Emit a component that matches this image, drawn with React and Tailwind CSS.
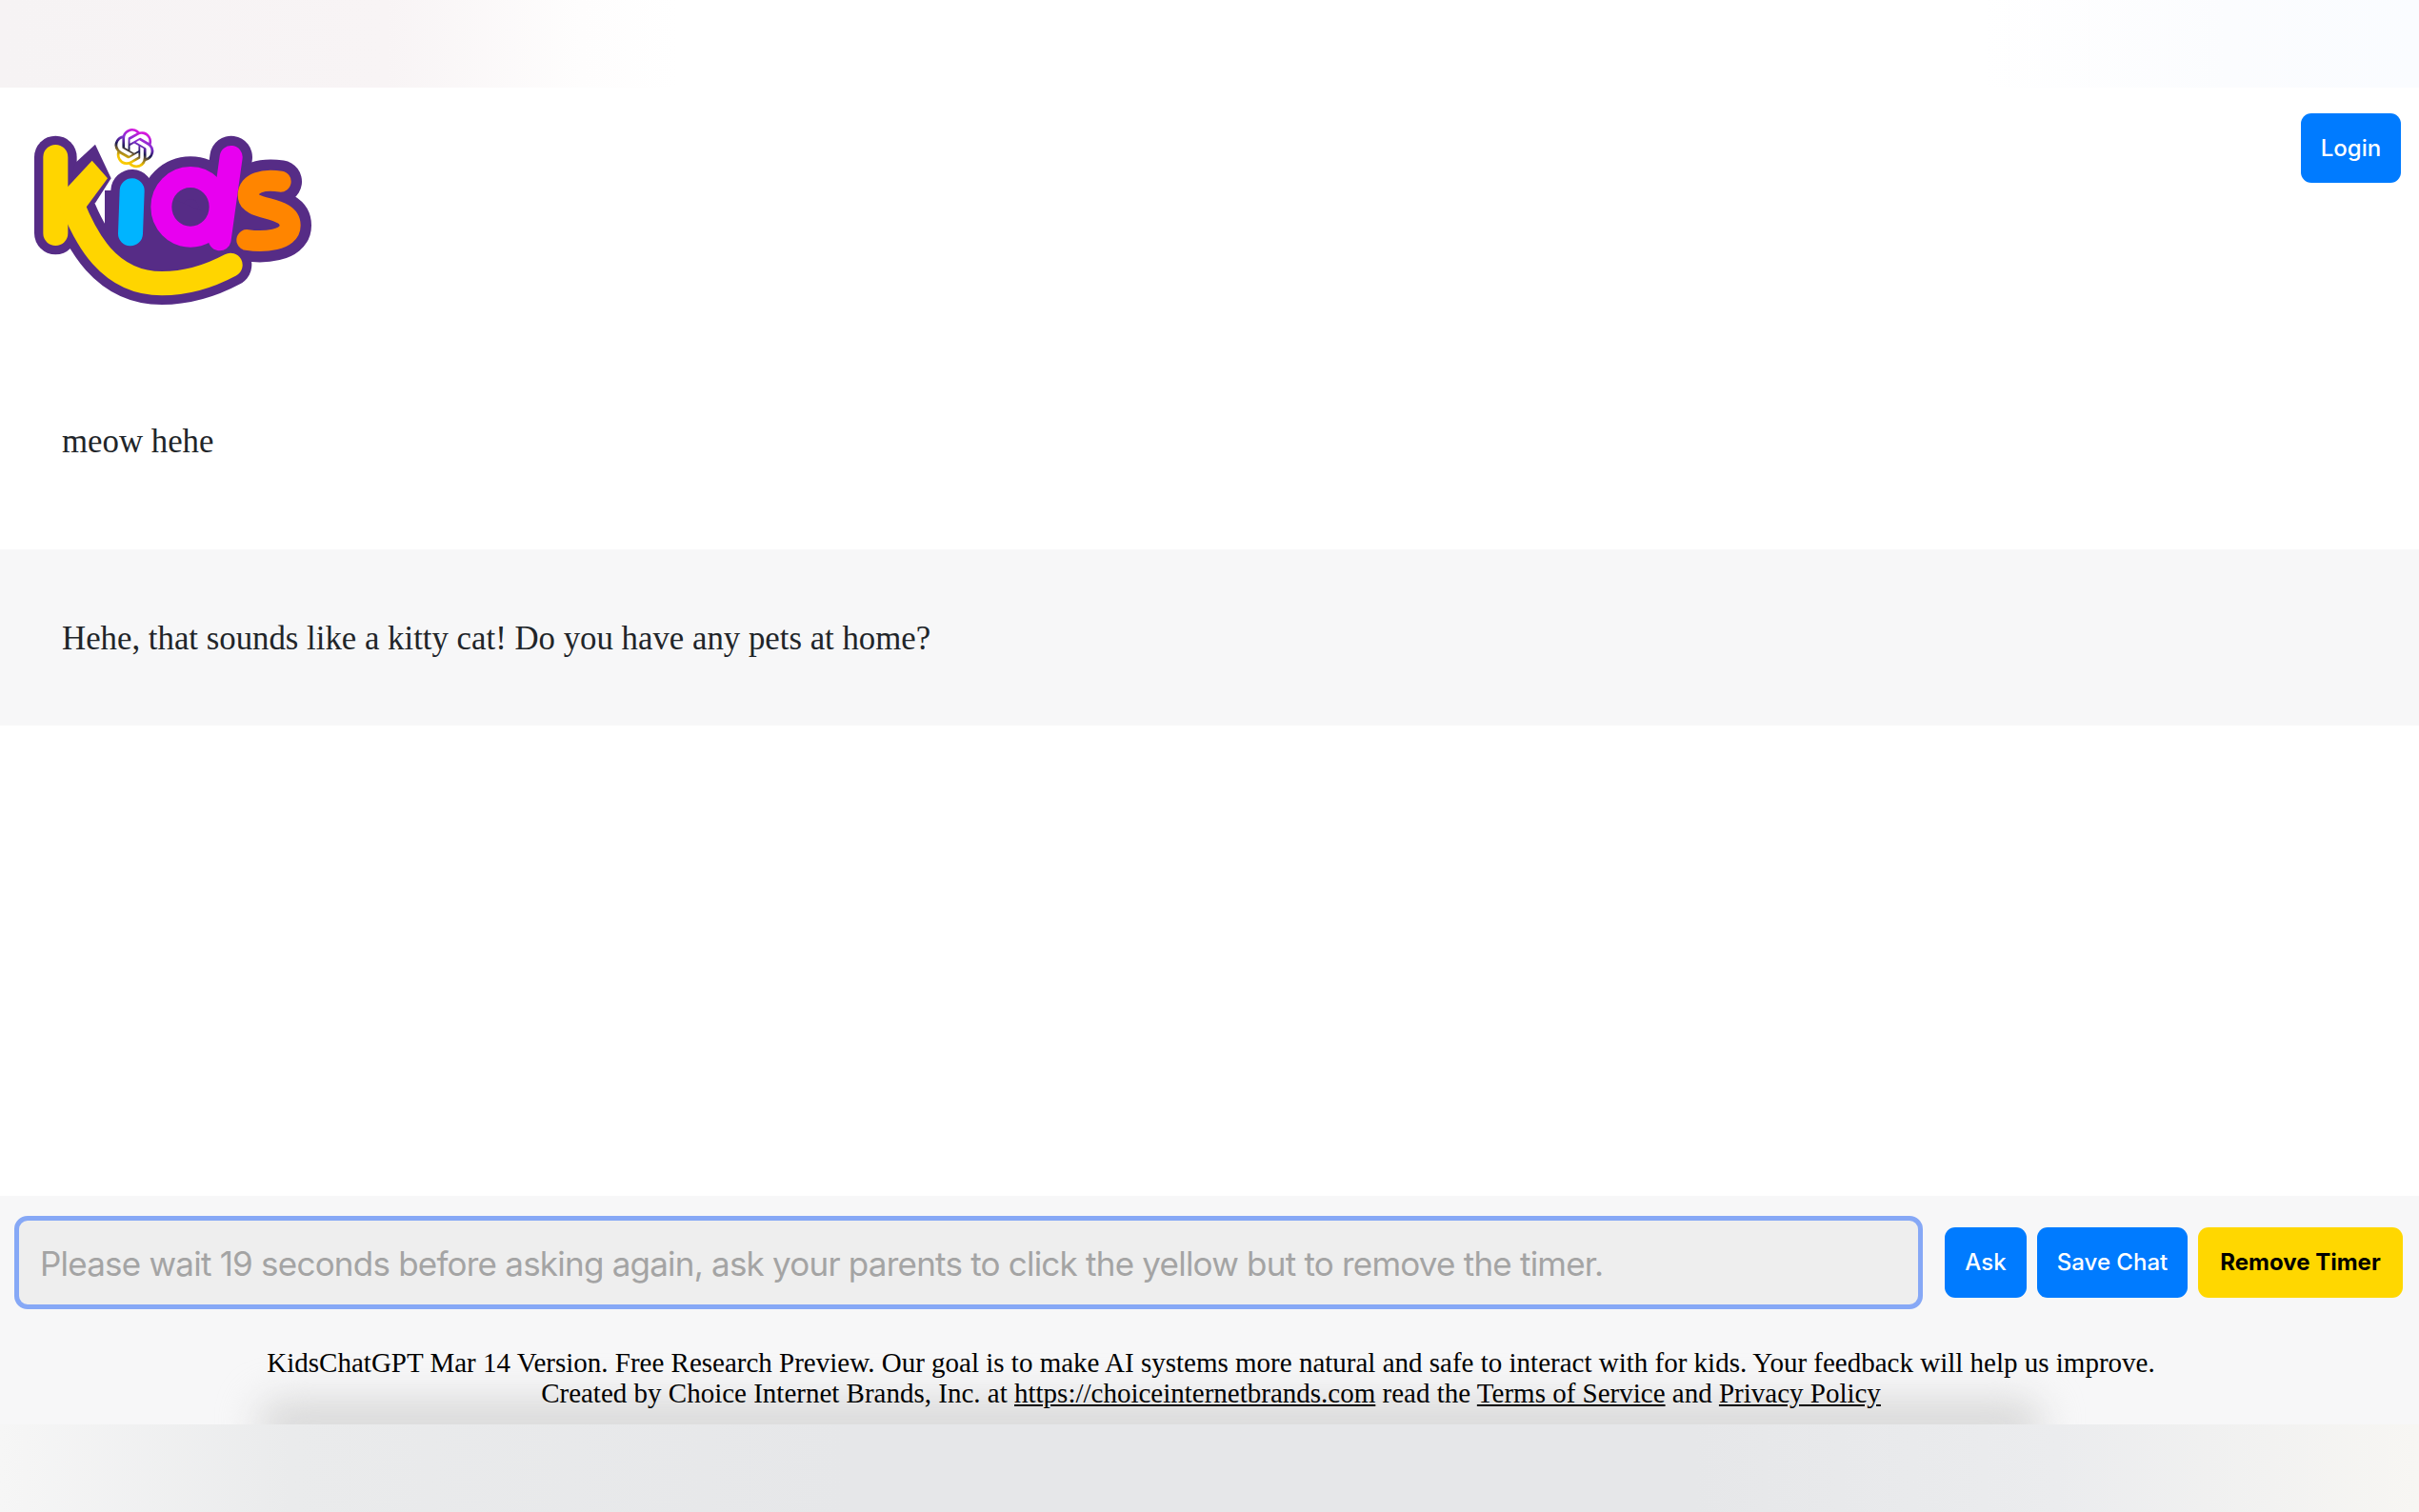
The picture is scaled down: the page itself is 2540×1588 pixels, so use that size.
const OPENAI_PATH =
  'M22.2819 9.8211a5.9847 5.9847 0 0 0-.5157-4.9108 6.0462 6.0462 0 0 0-6.5098-2.9A6.0651 6.0651 0 0 0 4.9807 4.1818a5.9847 5.9847 0 0 0-3.9977 2.9 6.0462 6.0462 0 0 0 .7427 7.0966 5.98 5.98 0 0 0 .511 4.9107 6.051 6.051 0 0 0 6.5146 2.9001A5.9847 5.9847 0 0 0 13.2599 24a6.0557 6.0557 0 0 0 5.7718-4.2058 5.9894 5.9894 0 0 0 3.9977-2.9001 6.0557 6.0557 0 0 0-.7475-7.0729zm-9.022 12.6081a4.4755 4.4755 0 0 1-2.8764-1.0408l.1419-.0804 4.7783-2.7582a.7948.7948 0 0 0 .3927-.6813v-6.7369l2.02 1.1686a.071.071 0 0 1 .038.052v5.5826a4.504 4.504 0 0 1-4.4945 4.4944zm-9.6607-4.1254a4.4708 4.4708 0 0 1-.5346-3.0137l.142.0852 4.783 2.7582a.7712.7712 0 0 0 .7806 0l5.8428-3.3685v2.3324a.0804.0804 0 0 1-.0332.0615L9.74 19.9502a4.4992 4.4992 0 0 1-6.1408-1.6464zM2.3408 7.8956a4.485 4.485 0 0 1 2.3655-1.9728V11.6a.7664.7664 0 0 0 .3879.6765l5.8144 3.3543-2.0201 1.1685a.0757.0757 0 0 1-.071 0l-4.8303-2.7865A4.504 4.504 0 0 1 2.3408 7.872zm16.5963 3.8558L13.1038 8.364 15.1192 7.2a.0757.0757 0 0 1 .071 0l4.8303 2.7913a4.4944 4.4944 0 0 1-.6765 8.1042v-5.6772a.79.79 0 0 0-.407-.667zm2.0107-3.0231l-.142-.0852-4.7735-2.7818a.7759.7759 0 0 0-.7854 0L9.409 9.2297V6.8974a.0662.0662 0 0 1 .0284-.0615l4.8303-2.7866a4.4992 4.4992 0 0 1 6.6802 4.66zM8.3065 12.863l-2.02-1.1638a.0804.0804 0 0 1-.038-.0567V6.0742a4.4992 4.4992 0 0 1 7.3757-3.4537l-.142.0805L8.704 5.459a.7948.7948 0 0 0-.3927.6813zm1.0976-2.3654l2.602-1.4998 2.6069 1.4998v2.9994l-2.5974 1.4997-2.6067-1.4997Z';

const K_STEM = 'M175 195 L175 435';
const SMILE = 'M228 345 C268 445 340 593 510 593 C600 593 670 565 726 535';
const I_STEM = 'M416 301 L411 436';
const D_STEM = 'M728 195 L692 454';
const S_CURVE = 'M884 272 C830 264 782 275 782 315 C782 368 914 345 914 410 C914 458 830 464 778 456';

function KidsLogo() {
  return (
    <svg width="300" height="194" viewBox="90 100 900 580" fill="none" strokeLinecap="round">
      <defs>
        <linearGradient id="knot" x1="0.7" y1="0" x2="0.3" y2="1">
          <stop offset="0" stopColor="#f010e0" />
          <stop offset="0.35" stopColor="#8030d0" />
          <stop offset="0.55" stopColor="#1a1a50" />
          <stop offset="0.8" stopColor="#f0c000" />
          <stop offset="1" stopColor="#ffd000" />
        </linearGradient>
      </defs>

      {/* purple outline */}
      <g stroke="#562c86" strokeWidth="134" strokeLinejoin="round">
        <path d={K_STEM} />
        <path d={SMILE} />
        <path d={I_STEM} />
        <path d={D_STEM} />
        <path d={S_CURVE} />
        <ellipse cx="600" cy="352" rx="92" ry="92" fill="#562c86" />
      </g>
      <path d="M235 215 L300 155 L350 262 L300 340 L215 340 Z" fill="#562c86" />
      <path d="M330 300 L480 300 L720 400 L740 540 L500 560 L330 500 Z" fill="#562c86" />

      {/* letters */}
      <path d={K_STEM} stroke="#ffd500" strokeWidth="78" />
      <path d={SMILE} stroke="#ffd500" strokeWidth="76" />
      <path d="M290 206 L339 262 L244 390 L205 390 L205 298 Z" fill="#ffd500" />
      <path d={I_STEM} stroke="#00b4ff" strokeWidth="78" />
      <ellipse cx="600" cy="352" rx="92" ry="94" stroke="#e800f0" strokeWidth="66" />
      <path d={D_STEM} stroke="#e800f0" strokeWidth="72" />
      <path d={S_CURVE} stroke="#ff8500" strokeWidth="66" />

      {/* knot badge */}
      <circle cx="423" cy="167" r="60" fill="#fff" />
      <path transform="translate(361 105) scale(5.15)" d={OPENAI_PATH} fill="url(#knot)" />
    </svg>
  );
}

export default function App() {
  return (
    <div className="flex flex-col h-[1588px] overflow-hidden bg-white font-['Liberation_Serif',serif]">
      <div className="h-[92px] shrink-0 bg-[linear-gradient(90deg,#f6f3f4_0%,#f8f4f5_16%,#fefdfd_24%,#ffffff_28%,#ffffff_82%,#fbfcfe_92%,#fafcff_100%)]" />

      <header className="flex justify-between items-start h-[300px] shrink-0 pl-[30px] pr-[19px]">
        <div className="pt-[41px]">
          <KidsLogo />
        </div>
        <button className="mt-[27px] w-[105px] h-[73px] rounded-[11px] bg-[#007bff] text-white text-[24px] font-medium font-['Inter',sans-serif]">
          Login
        </button>
      </header>

      <main className="flex-1">
        <div className="h-[185px] px-[65px] flex items-center bg-white text-[#212529] text-[34.8px]">
          <p className="-mt-[40px]">meow hehe</p>
        </div>
        <div className="h-[185px] px-[65px] flex items-center bg-[#f7f7f8] text-[#212529] text-[34.8px]">
          <p className="mt-[3px]">Hehe, that sounds like a kitty cat! Do you have any pets at home?</p>
        </div>
      </main>

      <section className="relative overflow-hidden h-[240px] shrink-0 bg-[#f7f7f8] pt-[21px] pl-[15px] pr-[17px]">
        <div className="absolute -bottom-[26px] left-[270px] right-[395px] h-[52px] rounded-full bg-[#d8d8d8] blur-[20px]" />
        <div className="relative flex items-center">
          <input
            disabled
            placeholder="Please wait 19 seconds before asking again, ask your parents to click the yellow but to remove the timer."
            className="flex-1 h-[98px] rounded-[14px] border-[5px] border-[#86a8f6] bg-[#eeeeee] pl-[22px] pt-[2px] text-[35px] tracking-[-0.78px] font-['Inter',sans-serif] placeholder:text-[#a4a4a4]"
          />
          <div className="flex gap-[11px] ml-[23px] font-['Inter',sans-serif] text-[24px] font-medium">
            <button className="w-[86px] h-[74px] rounded-[11px] bg-[#007bff] text-white">Ask</button>
            <button className="w-[158px] h-[74px] rounded-[11px] bg-[#007bff] text-white">Save Chat</button>
            <button className="w-[215px] h-[74px] rounded-[11px] bg-[#ffd700] text-black font-bold">Remove Timer</button>
          </div>
        </div>
        <div className="relative mt-[40px] pl-[5px] text-center text-black text-[29px] leading-[32px]">
          <p>KidsChatGPT Mar 14 Version. Free Research Preview. Our goal is to make AI systems more natural and safe to interact with for kids. Your feedback will help us improve.</p>
          <p>
            Created by Choice Internet Brands, Inc. at <a className="underline" href="#">https://choiceinternetbrands.com</a> read the <a className="underline" href="#">Terms of Service</a> and <a className="underline" href="#">Privacy Policy</a>
          </p>
        </div>
      </section>

      <div className="h-[92px] shrink-0 bg-[linear-gradient(90deg,#f6f6f6_0%,#eaebec_12%,#e6e7e9_35%,#e6e7e9_70%,#ebecee_85%,#f7f6f3_100%)]" />
    </div>
  );
}
